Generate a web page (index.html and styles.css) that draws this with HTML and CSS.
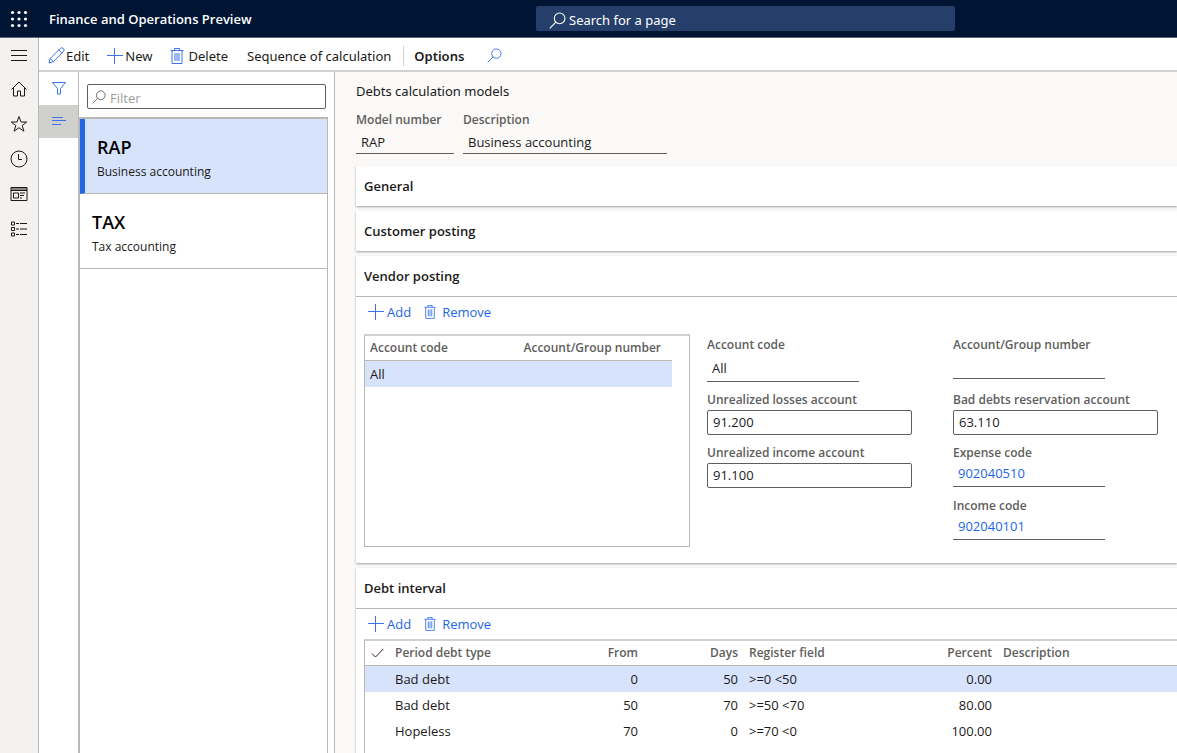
FILE: index.html
```html
<!DOCTYPE html>
<html lang="en">
<head>
<meta charset="utf-8">
<meta name="viewport" content="width=device-width, initial-scale=1">
<title>Finance and Operations Preview</title>
<link rel="stylesheet" href="styles.css">
</head>
<body>
<svg class="symbols" aria-hidden="true">
  <symbol id="i-plus" viewBox="0 0 16 16"><path d="M7.5 0v16M0 7.5h16"/></symbol>
  <symbol id="i-trash" viewBox="0 0 14 16"><path d="M0.5 2.5h13M2 2.5v13h10v-13M4.5 2.5v-2h5v2M5 5v8M7 5v8M9 5v8"/></symbol>
  <symbol id="i-search" viewBox="0 0 16 16"><circle cx="10" cy="6" r="5"/><path d="M6.5 9.5 0.7 15.3"/></symbol>
</svg>
<header class="topbar">
  <button class="waffle" aria-label="App launcher">
    <svg width="18" height="18" viewBox="0 0 18 18"><g fill="#fff"><circle cx="2.5" cy="2.5" r="1.6"/><circle cx="9" cy="2.5" r="1.6"/><circle cx="15.5" cy="2.5" r="1.6"/><circle cx="2.5" cy="9" r="1.6"/><circle cx="9" cy="9" r="1.6"/><circle cx="15.5" cy="9" r="1.6"/><circle cx="2.5" cy="15.5" r="1.6"/><circle cx="9" cy="15.5" r="1.6"/><circle cx="15.5" cy="15.5" r="1.6"/></g></svg>
  </button>
  <div class="brand">Finance and Operations Preview</div>
  <label class="page-search">
    <svg class="icon" width="17" height="17"><use href="#i-search"/></svg>
    <input type="text" placeholder="Search for a page" aria-label="Search for a page">
  </label>
</header>
<div class="shell">
  <nav class="rail" aria-label="Navigation">
    <button class="expand" aria-label="Expand"><svg class="icon" width="18" height="18" viewBox="0 0 18 18"><path d="M1 4.500h16M1 9.500h16M1 14.500h16"/></svg></button>
    <button aria-label="Home"><svg class="icon" width="18" height="18" viewBox="0 0 18 18"><path d="M1.500 9.500 9 2l7.500 7.500M3.500 8v8h4v-5h3v5h4V8"/></svg></button>
    <button aria-label="Favorites"><svg class="icon" width="18" height="18" viewBox="0 0 18 18"><path d="m9 1.500 2 5.500h5.700l-4.500 3.500 1.700 5.700L9 12.700l-4.900 3.500 1.700-5.700L1.300 7H7z"/></svg></button>
    <button aria-label="Recent"><svg class="icon" width="18" height="18" viewBox="0 0 18 18"><circle cx="9" cy="9" r="8"/><path d="M8.500 4v5.500H12"/></svg></button>
    <button aria-label="Workspaces"><svg class="icon" width="18" height="18" viewBox="0 0 18 18"><path d="M1 2.500h16v13H1zM1 5.500h16M1 4h16M3.500 8h5v5h-5zM10 8h5M10 10.500h4M10 13h2"/></svg></button>
    <button aria-label="Modules"><svg class="icon" width="18" height="18" viewBox="0 0 18 18"><path d="M1.500 2h3v3h-3zM1.500 7.500h3v3h-3zM1.500 13h3v3h-3zM6 3.500h3M10 3.500h7M6 9h3M10 9h7M6 14.500h3M10 14.500h7"/></svg></button>
  </nav>
  <div class="workspace">
    <div class="actions" role="toolbar">
      <button class="edit"><svg class="icon blue" width="17" height="17" viewBox="0 0 17 17"><path d="M1 16 2.200 11.500 12.200 1.500a2.200 2.200 0 0 1 3.200 3.200L5.400 14.700zM2.200 11.500l3.200 3.200M10.800 2.900l3.200 3.200"/></svg>Edit</button>
      <button class="new"><svg class="icon blue" width="16" height="16"><use href="#i-plus"/></svg>New</button>
      <button class="delete"><svg class="icon blue" width="14" height="16"><use href="#i-trash"/></svg>Delete</button>
      <button class="sequence">Sequence of calculation</button>
      <button class="options">Options</button>
      <button aria-label="Find an action"><svg class="icon blue" width="15" height="15"><use href="#i-search"/></svg></button>
    </div>
    <div class="panes">
      <div class="pane-tabs">
        <button aria-label="Show filters"><svg class="icon blue" width="14" height="14" viewBox="0 0 14 14"><path d="M0.500 1.500h13l-5 6v5.500h-3V7.500z"/></svg></button>
        <button class="active" aria-label="Show list"><svg class="icon blue" width="14" height="10" viewBox="0 0 14 10"><path d="M0 1.500h11M0 4.500h14M0 8.500h9"/></svg></button>
      </div>
      <aside class="list-pane">
        <label class="filter">
          <svg class="icon" width="14" height="14"><use href="#i-search"/></svg>
          <input type="text" placeholder="Filter" aria-label="Filter">
        </label>
        <div class="records">
          <button class="record selected"><strong>RAP</strong><span>Business accounting</span></button>
          <button class="record"><strong>TAX</strong><span>Tax accounting</span></button>
        </div>
      </aside>
      <main class="detail">
        <h1>Debts calculation models</h1>
        <div class="heading-fields">
          <div class="field"><label for="model">Model number</label><input id="model" class="line" value="RAP" readonly></div>
          <div class="field"><label for="desc">Description</label><input id="desc" class="line" value="Business accounting" readonly></div>
        </div>
        <section class="card"><h2><button>General</button></h2></section>
        <section class="card"><h2><button>Customer posting</button></h2></section>
        <section class="card vendor">
          <h2><button>Vendor posting</button></h2>
          <div class="card-body">
            <div class="commands">
              <button><svg class="icon blue" width="16" height="16"><use href="#i-plus"/></svg>Add</button>
              <button class="remove"><svg class="icon blue" width="12" height="14"><use href="#i-trash"/></svg>Remove</button>
            </div>
            <div class="posting">
              <div class="account-grid">
                <table>
                  <thead><tr><th>Account code</th><th>Account/Group number</th></tr></thead>
                  <tbody><tr class="current"><td>All</td><td></td></tr></tbody>
                </table>
              </div>
              <div class="posting-fields">
                <div class="field"><label for="code">Account code</label><input id="code" class="line tall" value="All" readonly></div>
                <div class="field"><label for="group">Account/Group number</label><input id="group" class="line" readonly></div>
                <div class="field"><label for="losses">Unrealized losses account</label><input id="losses" class="box" value="91.200"></div>
                <div class="field"><label for="bad">Bad debts reservation account</label><input id="bad" class="box" value="63.110"></div>
                <div class="field"><label for="income">Unrealized income account</label><input id="income" class="box" value="91.100"></div>
                <div class="field"><span class="caption" id="expense">Expense code</span><a class="line" href="#" aria-describedby="expense">902040510</a></div>
                <div class="field second"><span class="caption" id="incode">Income code</span><a class="line" href="#" aria-describedby="incode">902040101</a></div>
              </div>
            </div>
          </div>
        </section>
        <section class="card debt">
          <h2><button>Debt interval</button></h2>
          <div class="card-body">
            <div class="commands">
              <button><svg class="icon blue" width="16" height="16"><use href="#i-plus"/></svg>Add</button>
              <button class="remove"><svg class="icon blue" width="12" height="14"><use href="#i-trash"/></svg>Remove</button>
            </div>
            <div class="interval-grid">
              <table class="intervals">
                <colgroup><col class="c-check"><col class="c-type"><col class="c-from"><col class="c-days"><col class="c-register"><col class="c-percent"><col></colgroup>
                <thead><tr><th><svg class="icon check" width="13" height="10" viewBox="0 0 13 10"><path d="m1 5.500 3.500 3.500L12.300 1"/></svg></th><th>Period debt type</th><th class="num">From</th><th class="num">Days</th><th>Register field</th><th class="num">Percent</th><th>Description</th></tr></thead>
                <tbody>
                  <tr class="current"><td></td><td>Bad debt</td><td class="num">0</td><td class="num">50</td><td>&gt;=0 &lt;50</td><td class="num">0.00</td><td></td></tr>
                  <tr><td></td><td>Bad debt</td><td class="num">50</td><td class="num">70</td><td>&gt;=50 &lt;70</td><td class="num">80.00</td><td></td></tr>
                  <tr><td></td><td>Hopeless</td><td class="num">70</td><td class="num">0</td><td>&gt;=70 &lt;0</td><td class="num">100.00</td><td></td></tr>
                </tbody>
              </table>
            </div>
          </div>
        </section>
      </main>
    </div>
  </div>
</div>
</body>
</html>
```
FILE: styles.css
```css
* { box-sizing: border-box; }
body {
  margin: 0;
  min-height: 100vh;
  display: flex;
  flex-direction: column;
  background: #fff;
  color: #1b1a19;
  font: 13px/20px "Open Sans", "Noto Sans", sans-serif;
}
button, input { font: inherit; color: inherit; margin: 0; padding: 0; border: 0; background: none; }
button { display: flex; align-items: center; text-align: left; white-space: nowrap; }
input { min-width: 0; outline: none; }
h1, h2 { margin: 0; font-size: 13px; font-weight: 400; }
h1 { font-family: "Noto Sans", "Open Sans", sans-serif; }
table { border-collapse: separate; border-spacing: 0; table-layout: fixed; }
.symbols { position: absolute; width: 0; height: 0; }
.icon { fill: none; stroke: currentColor; stroke-width: 1; flex: none; }
.blue { color: #3b74ee; }

.topbar {
  display: grid;
  grid-template-columns: 49px minmax(0, 487px) minmax(0, 419px) 1fr;
  align-items: center;
  height: 38px;
  background: #001433;
  border-bottom: 1px solid #5b6780;
  color: #fff;
}
.waffle { padding-left: 10px; }
.brand { font-weight: 600; white-space: nowrap; }
.page-search {
  display: flex;
  align-items: center;
  gap: 3px;
  height: 25px;
  padding: 3px 13px 0;
  background: #263f6a;
  border-radius: 2px;
}
.page-search input { flex: 1; font-family: "Noto Sans", "Open Sans", sans-serif; }
.page-search input::placeholder { color: #fff; opacity: 1; }

.shell { flex: 1; display: flex; }
.rail {
  flex: none;
  width: 39px;
  background: #f3f2f1;
  border-right: 1px solid #bab7b4;
}
.rail button { width: 38px; height: 35px; justify-content: center; }
.rail .expand { height: 33px; }
.workspace { flex: 1; min-width: 0; display: flex; flex-direction: column; }
.actions {
  display: flex;
  align-items: center;
  height: 34px;
  padding: 3px 0 0 9px;
  border-bottom: 2px solid #d2d0ce;
  font-family: "Noto Sans", "Open Sans", sans-serif;
}
.edit { gap: 1px; }
.new { gap: 2px; margin-left: 18px; }
.delete { gap: 4px; margin-left: 18px; }
.sequence { margin-left: 19px; padding-right: 12px; border-right: 1px solid #d2d0ce; }
.options { margin: 0 23px 0 10px; font-weight: 600; }

.panes { flex: 1; display: flex; }
.pane-tabs { flex: none; width: 40px; border-right: 1px solid #bab7b4; }
.pane-tabs button { width: 39px; height: 33px; justify-content: center; padding-bottom: 2px; }
.pane-tabs .active { background: #d0d0ce; }
.list-pane {
  flex: none;
  width: 256px;
  display: flex;
  flex-direction: column;
  border-right: 1px solid #bab7b4;
}
.filter {
  display: flex;
  align-items: center;
  gap: 4px;
  height: 25px;
  margin: 12px 8px 8px;
  padding-left: 4px;
  border: 1px solid #605e5c;
  border-radius: 2px;
  color: #605e5c;
}
.filter input { flex: 1; padding-top: 2px; }
.filter input::placeholder { color: #a19f9d; opacity: 1; }
.records { flex: 1; margin-right: 6px; border: solid #bab7b4; border-width: 2px 1px 0 1px; }
.record {
  display: block;
  width: 100%;
  height: 75px;
  padding: 6px 12px 0;
  border-bottom: 1px solid #bab7b4;
}
.record strong { display: block; font-size: 18px; line-height: 26px; font-weight: 600; color: #000; }
.record span { display: block; font-size: 12px; line-height: 24px; }
.selected { background: #d7e3fb; border-left: 5px solid #2266e3; }

.detail { flex: 1; min-width: 0; display: flex; flex-direction: column; padding: 9px 0 0 21px; background: #faf9f8; }
.heading-fields { display: grid; grid-template-columns: 98px 204px; column-gap: 9px; margin: 9px 0 12px; }
.field { display: flex; flex-direction: column; min-width: 0; }
.field label, .caption { color: #605e5c; font-size: 12px; font-weight: 600; line-height: 20px; white-space: nowrap; }
.line { height: 24px; padding: 0 5px; border-bottom: 1px solid #605e5c; }
.posting-fields .line { width: 152px; }
.posting-fields .tall { height: 27px; }
.box { width: 100%; height: 25px; padding: 0 5px 1px; border: 1px solid #605e5c; border-radius: 2px; }
a.line { color: #2266e3; text-decoration: none; }

.card { margin-bottom: 5px; background: #fff; box-shadow: 0 1px 2px rgba(0, 0, 0, 0.35); }
.card h2 button { width: 100%; height: 40px; padding-left: 8px; font-weight: 600; }
.vendor h2, .debt h2 { border-bottom: 1px solid #bab7b4; }
.card-body { padding-left: 8px; }
.commands { display: flex; gap: 13px; height: 30px; padding-left: 4px; color: #2266e3; }
.commands button { gap: 3px; }
.commands .remove { gap: 6px; }
.posting { display: grid; grid-template-columns: minmax(0, 326px) minmax(0, 451px); gap: 17px; padding: 7px 18px 16px 0; }
.account-grid { height: 213px; border: 1px solid #bab7b4; border-top: 2px solid #d2d0ce; }
.account-grid table { width: calc(100% - 17px); }
th { height: 25px; padding: 0; text-align: left; color: #605e5c; font-size: 12px; font-weight: 600; border-bottom: 1px solid #bab7b4; white-space: nowrap; }
td { height: 26px; padding: 0; white-space: nowrap; }
.account-grid th, .account-grid td { padding-left: 5px; }
.current { background: #d7e3fb; }
.posting-fields { display: grid; grid-template-columns: 1fr 1fr; gap: 8px 41px; padding-top: 1px; align-content: start; align-items: start; }
.second { grid-column: 2; }
.debt { flex: 1; display: flex; flex-direction: column; margin-bottom: 0; }
.debt .card-body { flex: 1; display: flex; flex-direction: column; }
.interval-grid { flex: 1; border-left: 1px solid #bab7b4; border-top: 2px solid #d2d0ce; }
.intervals { width: 100%; }
.intervals .num { text-align: right; padding-right: 11px; }
.check { display: block; margin-left: 6px; color: #3b1820; }
.c-check { width: 30px; }
.c-type { width: 154px; }
.c-from { width: 100px; }
.c-days { width: 100px; }
.c-register { width: 154px; }
.c-percent { width: 100px; }
```
